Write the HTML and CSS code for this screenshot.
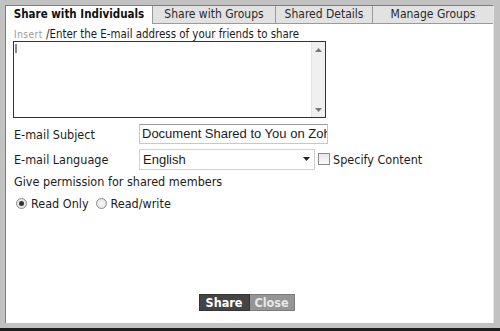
FILE: index.html
```
<!DOCTYPE html>
<html>
<head>
<meta charset="utf-8">
<link rel="stylesheet" href="styles.css">
</head>
<body>
<div class="dialog">
  <div class="panel">
    <div class="tabs">
      <div class="tab active t1">Share with Individuals</div>
      <div class="tab t2">Share with Groups</div>
      <div class="tab t3">Shared Details</div>
      <div class="tab t4">Manage Groups</div>
    </div>
    <div class="content">
      <div class="hint"><span class="insert">Insert</span> /Enter the E-mail address of your friends to share</div>
      <div class="textarea">
        <div class="caret"></div>
        <div class="scroll">
          <svg width="7" height="4" viewBox="0 0 7 4"><path d="M0 4 L3.5 0 L7 4Z" fill="#777"/></svg>
          <svg width="7" height="4" viewBox="0 0 7 4"><path d="M0 0 L3.5 4 L7 0Z" fill="#777"/></svg>
        </div>
      </div>
      <div class="row">
        <div class="label">E-mail Subject</div>
        <div class="input">Document Shared to You on Zoho</div>
      </div>
      <div class="row">
        <div class="label">E-mail Language</div>
        <div class="select">English<svg width="7" height="4" viewBox="0 0 7 4"><path d="M0 0 L3.5 4 L7 0Z" fill="#222"/></svg></div>
        <div class="check"></div>
        <div class="checklabel">Specify Content</div>
      </div>
      <div class="perm">Give permission for shared members</div>
      <div class="radios">
        <span class="radio on"></span><span class="rlabel">Read Only</span>
        <span class="radio"></span><span class="rlabel">Read/write</span>
      </div>
      <div class="buttons">
        <div class="btn share">Share</div>
        <div class="btn close">Close</div>
      </div>
    </div>
  </div>
</div>
</body>
</html>
```
FILE: styles.css
```
html, body { margin: 0; padding: 0; }
body { width: 500px; height: 331px; overflow: hidden; background: #fff; }
.dialog {
  box-sizing: border-box;
  width: 500px; height: 331px;
  background: #c2c2c2;
  border-bottom: 3px solid #1e1e1e;
  padding: 5px 6px 5px 5px;
  display: flex;
}
.panel {
  flex: 1;
  background: #fff;
  border-left: 1px solid #7e7e7e;
  border-top: 1px solid #7e7e7e;
  border-right: 1px solid #e6e6e6;
  display: flex; flex-direction: column;
  font-family: "DejaVu Sans Condensed", "DejaVu Sans", sans-serif;
  color: #1c1c1c;
}
.tabs { display: flex; height: 18px; }
.tab {
  box-sizing: border-box;
  height: 18px;
  font-size: 12px;
  line-height: 17px;
  text-align: center;
  background: #e2e2e2;
  border-left: 1px solid #9a9a9a;
  border-bottom: 1px solid #9a9a9a;
  color: #2a2a2a;
}
.tab.active { background: #fff; border-left: none; border-bottom: none; font-weight: bold; color: #111; font-size: 11.5px; }
.t1 { width: 146px; }
.t2 { width: 123px; }
.t3 { width: 97px; }
.t4 { flex: 1; }
.content { padding: 3px 0 0 8px; display: flex; flex-direction: column; flex: 1; }
.hint { font-size: 11.4px; line-height: 14px; height: 14px; white-space: nowrap; }
.insert { font-size: 10px; color: #9a9a9a; letter-spacing: 0.5px; }
.textarea {
  box-sizing: border-box;
  width: 313px; height: 77px;
  border: 1px solid #333;
  margin-left: -1px;
  display: flex; justify-content: space-between;
}
.caret { width: 2px; height: 9px; background: #888; margin: 2px 0 0 1px; }
.scroll {
  width: 14px; background: #f0f0f0; border-left: 1px solid #e2e2e2;
  display: flex; flex-direction: column; justify-content: space-between; align-items: center;
  padding: 6px 0 5px; box-sizing: border-box;
}
.row { display: flex; align-items: center; margin-top: 6px; height: 20px; }
.row + .row { margin-top: 5px; }
.label { width: 125px; font-size: 12.5px; }
.input {
  box-sizing: border-box; width: 189px; height: 20px;
  border: 1px solid #c8c8c8; border-top-color: #999;
  font-family: "Liberation Sans", Arial, sans-serif; font-size: 13px;
  line-height: 18px; padding-left: 2px; white-space: nowrap; overflow: hidden;
}
.select {
  box-sizing: border-box; width: 176px; height: 21px;
  border: 1px solid #d0d0d0;
  font-family: "Liberation Sans", Arial, sans-serif; font-size: 13px;
  line-height: 19px; padding: 0 4px 0 3px;
  display: flex; justify-content: space-between; align-items: center;
}
.check {
  box-sizing: border-box; width: 12px; height: 12px; margin-left: 3px;
  border: 1px solid #8a8a8a; background: linear-gradient(#e8e8e8, #fafafa);
}
.checklabel { font-size: 12.5px; margin-left: 3px; }
.perm { font-size: 12.5px; margin-top: 5px; line-height: 15px; }
.radios { display: flex; align-items: center; margin-top: 7px; padding-left: 2px; font-size: 12.5px; height: 14px; }
.radio {
  box-sizing: border-box; width: 11px; height: 11px; border-radius: 50%;
  border: 1px solid #8a8a8a; background: radial-gradient(#fafafa, #dcdcdc);
  position: relative;
}
.radio.on::after {
  content: ""; position: absolute; left: 2px; top: 2px; width: 5px; height: 5px; border-radius: 50%; background: #333;
}
.rlabel { margin-left: 4px; margin-right: 7px; }
.buttons { margin-top: auto; margin-bottom: 12px; display: flex; justify-content: center; padding-right: 14px; }
.btn { height: 17px; line-height: 16px; font-size: 12.5px; font-weight: bold; box-sizing: border-box; text-align: center; }
.share { background: #444; color: #fff; border: 1px solid #333; width: 51px; }
.close { background: #959595; color: #e8e8e8; border: 1px solid #7d7d7d; border-left: none; width: 45px; }
```
